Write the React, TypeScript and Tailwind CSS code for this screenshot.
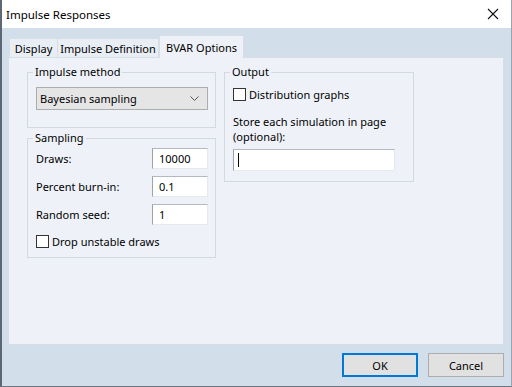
import React from 'react';

const font = { fontFamily: '"Noto Sans", "Open Sans", sans-serif' };

function Checkbox({ label }: { label: string }) {
  return (
    <label className="flex h-[16px] items-center gap-[3px]">
      <span className="h-[13px] w-[13px] border border-[#333333] bg-white" />
      <span>{label}</span>
    </label>
  );
}

function Field({ label, value }: { label: string; value: string }) {
  return (
    <div className="flex h-[21px] items-center justify-between">
      <span>{label}</span>
      <div className="flex h-[21px] w-[56px] items-center border-t border-l border-t-[#b4b9bf] border-l-[#9ea3a9] border-r border-b border-r-[#e6eaef] border-b-[#e6eaef] bg-white pl-[6px]">
        {value}
      </div>
    </div>
  );
}

function Group({ title, className, children }: { title: string; className?: string; children: React.ReactNode }) {
  return (
    <fieldset className={`border border-[#d3d9e1] ${className ?? ''}`}>
      <legend className="-ml-[3px] px-[2px] leading-[14px]">{title}</legend>
      {children}
    </fieldset>
  );
}

export default function App() {
  return (
    <div className="flex h-[387px] w-[512px] flex-col border-l-2 border-b border-r border-l-[#5d6875] border-b-[#6b7682] border-r-[#9aa4ae] text-[11px] leading-[15px] text-black" style={font}>
      <div className="flex h-[28px] items-center justify-between bg-white pl-[4px] pr-[12px]">
        <span className="text-[11.5px]">Impulse Responses</span>
        <svg width="12" height="12" viewBox="0 0 12 12">
          <path d="M1 1 L11 11 M11 1 L1 11" stroke="#111" strokeWidth="1.1" />
        </svg>
      </div>

      <div className="flex flex-1 flex-col bg-[#d3deeb] pl-[6px] pr-[7px] pt-[7px]">
        <div className="flex items-end pl-px">
          <div className="flex h-[19px] w-[49px] items-center justify-center border border-b-0 border-[#d8dee6] bg-[#e9eef5]">Display</div>
          <div className="flex h-[19px] w-[101px] items-center justify-center border border-l-0 border-b-0 border-[#d8dee6] bg-[#e9eef5]">Impulse Definition</div>
          <div className="relative -mb-px flex h-[23px] w-[85px] items-center justify-center border border-b-0 border-[#d8dee6] bg-[#eef2f8]">BVAR Options</div>
        </div>
        <div className="flex h-[288px] gap-[8px] border border-[#d8dee6] bg-[#eef2f8] pl-[18px] pt-[7px]">
          <div className="flex w-[189px] flex-col gap-[3px]">
            <Group title="Impulse method" className="pl-[8px] pr-[7px] pb-[17px]">
              <div className="mt-[8px] flex h-[23px] items-center justify-between border border-[#adadad] bg-[#e5e5e5] pl-[3px] pr-[8px]">
                <span>Bayesian sampling</span>
                <svg width="9" height="6" viewBox="0 0 9 6">
                  <path d="M0.5 0.5 L4.5 4.5 L8.5 0.5" fill="none" stroke="#555" strokeWidth="1" />
                </svg>
              </div>
            </Group>
            <Group title="Sampling" className="pl-[8px] pr-[7px] pb-[8px]">
              <div className="mt-[3px] flex flex-col gap-[7px]">
                <Field label="Draws:" value="10000" />
                <Field label="Percent burn-in:" value="0.1" />
                <Field label="Random seed:" value="1" />
              </div>
              <div className="mt-[8px]">
                <Checkbox label="Drop unstable draws" />
              </div>
            </Group>
          </div>
          <div className="flex w-[190px] flex-col">
            <Group title="Output" className="pl-[8px] pr-[18px] pb-[10px]">
              <div className="mt-[7px]">
                <Checkbox label="Distribution graphs" />
              </div>
              <p className="mt-[12px]">Store each simulation in page</p>
              <p>(optional):</p>
              <div className="mt-[5px] flex h-[22px] items-center border-t border-l border-t-[#b4b9bf] border-l-[#9ea3a9] border-r border-b border-r-[#e6eaef] border-b-[#e6eaef] bg-white pl-[4px]">
                <span className="h-[14px] w-px bg-black" />
              </div>
            </Group>
          </div>
        </div>
        <div className="flex justify-end gap-[10px] pt-[8px]">
          <button className="h-[24px] w-[76px] border-2 border-[#0078d7] bg-[#e1e1e1]">OK</button>
          <button className="h-[24px] w-[76px] border border-[#adadad] bg-[#e1e1e1]">Cancel</button>
        </div>
      </div>
    </div>
  );
}
